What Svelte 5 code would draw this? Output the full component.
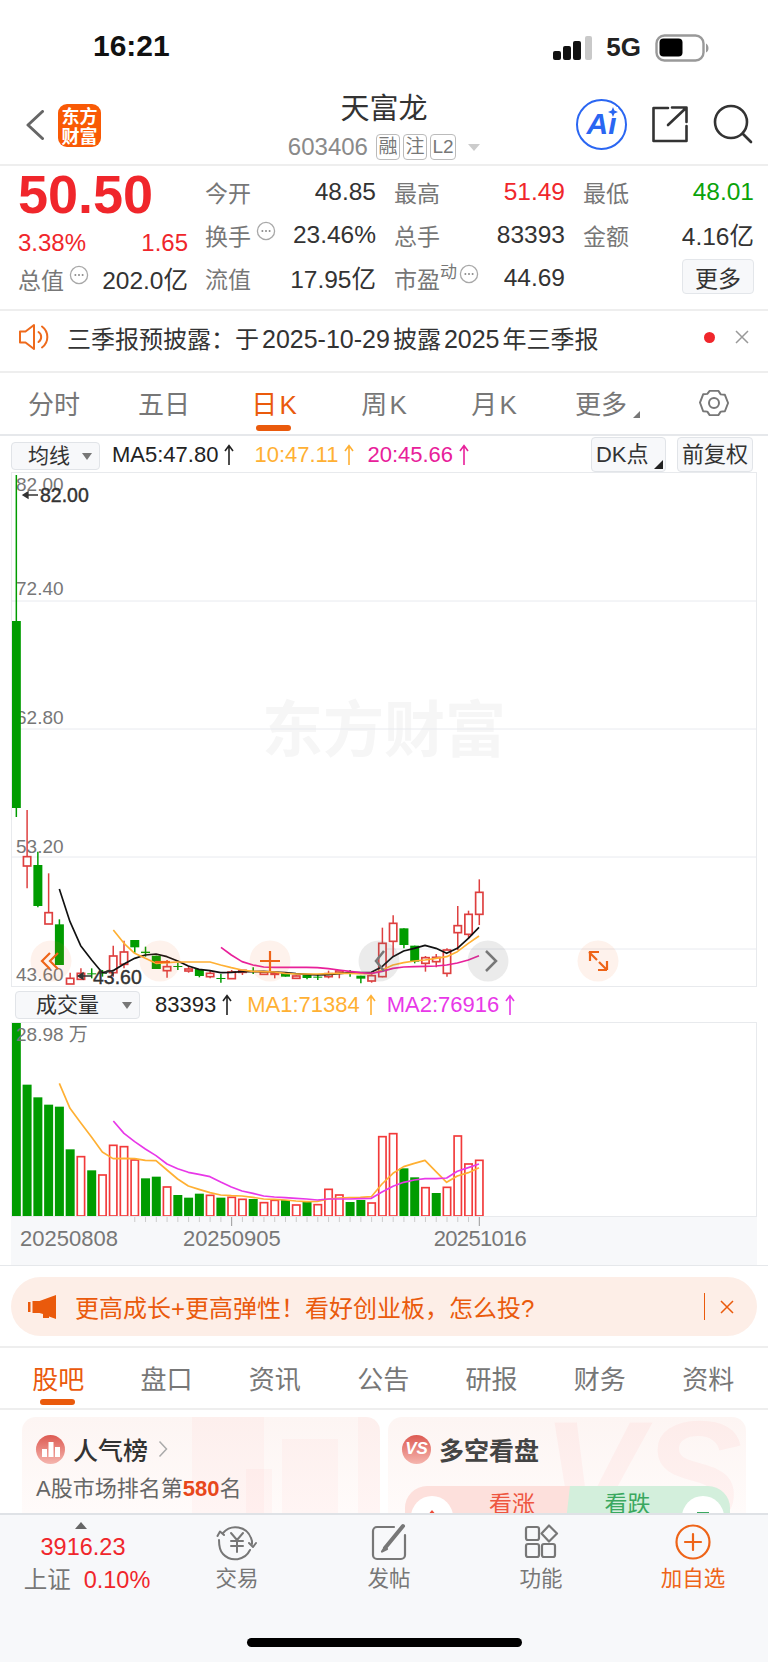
<script lang="ts">
	// Candle data is in the 3x units used when reading the chart: [x index, up, wickTop, wickBottom, bodyTop, bodyBottom]
	const candles: [number, number, number, number, number, number][] = [
		[0, 0, -915, 111, -477, 84], [1, 1, 90, 325, 230, 258], [2, 0, 215, 382, 255, 378], [3, 1, 280, 398, 398, 432],
		[4, 0, 418, 555, 433, 555], [5, 1, 578, 595, 595, 612], [6, 1, 565, 600, 580, 598], [7, 0, 565, 595, 580, 583],
		[8, 0, 570, 590, 578, 581], [9, 1, 497, 590, 528, 578], [10, 1, 482, 565, 516, 553], [11, 0, 480, 518, 480, 502],
		[12, 0, 500, 530, 515, 519], [13, 0, 527, 567, 527, 567], [14, 1, 540, 593, 560, 572], [15, 0, 548, 570, 558, 561],
		[16, 1, 558, 578, 567, 573], [17, 0, 567, 592, 567, 588], [18, 1, 572, 595, 580, 590], [19, 0, 582, 608, 594, 597],
		[20, 1, 570, 596, 576, 596], [21, 1, 571, 585, 571, 577], [22, 0, 562, 582, 573, 576], [23, 1, 574, 584, 576, 583],
		[24, 1, 578, 595, 578, 583], [25, 0, 578, 590, 578, 590], [26, 1, 586, 596, 588, 595], [27, 0, 584, 598, 584, 594],
		[28, 0, 582, 600, 590, 593], [29, 1, 572, 595, 581, 590], [30, 1, 572, 595, 573, 579], [31, 0, 570, 590, 578, 581],
		[32, 0, 587, 610, 587, 596], [33, 1, 578, 608, 587, 603], [34, 1, 443, 592, 490, 590], [35, 1, 406, 530, 430, 484],
		[36, 0, 445, 505, 445, 495], [37, 0, 497, 550, 497, 545], [38, 1, 528, 575, 533, 550], [39, 1, 522, 562, 532, 545],
		[40, 1, 505, 590, 510, 580], [41, 1, 378, 510, 437, 458], [42, 1, 392, 475, 403, 463], [43, 1, 298, 435, 337, 403]
	];

	const ma5 = '178,327 210,425 242,497 275,540 307,578 339,572 372,552 404,535 436,525 468,522 501,530 533,543 565,558 597,568 630,572 662,578 694,577 726,575 759,575 791,574 823,576 856,578 888,581 920,583 952,585 985,584 1017,581 1049,578 1081,578 1114,577 1146,560 1179,530 1211,513 1243,505 1275,496 1308,505 1340,520 1372,505 1405,475 1437,442';
	const ma10 = '340,450 372,490 404,520 436,535 468,550 501,548 533,546 565,546 597,546 630,546 662,555 694,563 726,570 759,574 791,575 823,576 856,580 888,582 920,582 952,582 985,581 1017,580 1049,580 1081,581 1114,581 1146,570 1179,555 1211,548 1243,543 1275,540 1308,535 1340,530 1372,515 1405,490 1437,468';
	const ma20 = '663,502 694,525 726,545 759,555 791,561 823,562 856,562 888,562 920,562 952,563 985,566 1017,570 1049,574 1081,578 1114,580 1146,574 1179,565 1211,561 1243,560 1275,559 1308,558 1340,555 1372,549 1405,540 1437,527';

	// [top, up]
	const volumes: [number, number][] = [
		[68, 0], [254, 0], [292, 0], [314, 0], [320, 0], [448, 0], [470, 1], [511, 0], [525, 1], [436, 1], [440, 1],
		[480, 1], [535, 0], [530, 0], [561, 1], [585, 0], [593, 0], [581, 0], [586, 1], [593, 0], [592, 1], [598, 1],
		[597, 0], [608, 1], [601, 1], [600, 0], [615, 1], [605, 0], [614, 1], [568, 1], [585, 1], [606, 0], [600, 0],
		[609, 1], [410, 1], [401, 1], [505, 0], [532, 0], [563, 1], [579, 0], [562, 1], [408, 1], [492, 1], [481, 1]
	];
	const volMa1 = '178,250 210,325 242,368 275,412 307,456 339,476 372,475 404,476 436,481 468,482 501,510 533,537 565,558 597,568 630,578 662,585 694,587 726,588 759,592 791,597 823,598 856,600 888,603 920,605 952,604 985,597 1017,594 1049,593 1081,592 1114,590 1146,552 1179,520 1211,500 1243,490 1275,481 1308,515 1340,547 1372,528 1405,518 1437,503';
	const volMa2 = '340,363 372,400 404,425 436,447 468,467 501,492 533,506 565,517 597,523 630,530 662,546 694,561 726,573 759,580 791,588 823,591 856,593 888,595 920,597 952,600 985,597 1017,597 1049,597 1081,596 1114,595 1146,576 1179,559 1211,547 1243,540 1275,536 1308,536 1340,534 1372,514 1405,503 1437,492';

	const cx = (i: number) => 49 + i * 32.3;
	const ticks = Array.from({ length: 33 }, (_, i) => 11 + i);

	const periods = ['分时', '五日', '日 K', '周 K', '月 K', '更多'];
	const sections = ['股吧', '盘口', '资讯', '公告', '研报', '财务', '资料'];
</script>

{#snippet dots(cls = '')}
	<svg class="dots {cls}" viewBox="0 0 20 20" width="20" height="20">
		<circle cx="10" cy="10" r="8.6" fill="none" stroke="#a8a8a8" stroke-width="1.3" />
		<circle cx="6.4" cy="10" r="1" fill="#8a8a8a" />
		<circle cx="10" cy="10" r="1" fill="#8a8a8a" />
		<circle cx="13.6" cy="10" r="1" fill="#8a8a8a" />
	</svg>
{/snippet}

{#snippet arrow()}
	<svg class="arrow" width="10" height="22" viewBox="0 0 10 22" fill="none" stroke="currentColor" stroke-width="1.6">
		<path d="M5 21V2M1 7l4-5.500L9 7" />
	</svg>
{/snippet}

{#snippet cross(size = 14)}
	<svg width={size} height={size} viewBox="0 0 14 14" fill="none" stroke="currentColor" stroke-width="1.5">
		<path d="M1 1l12 12M13 1 1 13" />
	</svg>
{/snippet}

<div class="page">
	<header class="status">
		<span class="time">16:21</span>
		<div class="status-right">
			<svg width="40" height="26" viewBox="0 0 40 26">
				<rect x="0" y="16" width="8" height="9" rx="2" fill="#111" />
				<rect x="10" y="11" width="8" height="14" rx="2" fill="#111" />
				<rect x="20" y="6" width="8" height="19" rx="2" fill="#111" />
				<rect x="32" y="1" width="7" height="24" rx="2" fill="#c9c9c9" />
			</svg>
			<span class="net">5G</span>
			<svg width="56" height="28" viewBox="0 0 56 28">
				<rect x="1.5" y="1.5" width="47" height="25" rx="8" fill="#fff" stroke="#999" stroke-width="2.4" />
				<rect x="4.5" y="4.5" width="23" height="18" rx="4" fill="#000" />
				<path d="M51 9.5c3 1 3.6 8 0 9z" fill="#999" />
			</svg>
		</div>
	</header>

	<nav class="topnav">
		<div class="topnav-left">
			<svg width="18" height="30" viewBox="0 0 18 30">
				<path d="M16.5 1.5 2 15l14.5 13.5" fill="none" stroke="#666" stroke-width="3" stroke-linecap="round" stroke-linejoin="round" />
			</svg>
			<div class="logo">东方<br />财富</div>
		</div>
		<div class="stock">
			<div class="stock-name">天富龙</div>
			<div class="stock-code">
				<span>603406</span>
				<i class="tag">融</i><i class="tag">注</i><i class="tag">L2</i>
				<b class="caret"></b>
			</div>
		</div>
		<div class="topnav-right">
			<div class="ai">
				<span>Ai</span>
				<svg class="spark" width="10" height="10" viewBox="0 0 10 10"><path d="M5 0 6.4 3.6 10 5 6.4 6.4 5 10 3.6 6.4 0 5 3.6 3.6z" fill="#2a66f2" /></svg>
			</div>
			<svg width="38" height="38" viewBox="0 0 38 38" fill="none" stroke="#333" stroke-width="2.6" stroke-linecap="round" stroke-linejoin="round">
				<path d="M17 3H2.5v33h33V21" />
				<path d="M17 20 35 3M21 2.5h14.5V17" />
			</svg>
			<svg width="40" height="40" viewBox="0 0 40 40" fill="none" stroke="#333" stroke-width="2.6" stroke-linecap="round">
				<circle cx="18" cy="18" r="16" />
				<path d="m30 30 8 8" />
			</svg>
		</div>
	</nav>

	<section class="quote">
		<div class="quote-main">
			<div class="price">50.50</div>
			<div class="change"><span>3.38%</span><span>1.65</span></div>
			<div class="cell"><span class="label">总值{@render dots()}</span><span class="val">202.0亿</span></div>
		</div>
		<div class="quote-grid">
			<div class="cell"><span class="label">今开</span><span class="val">48.85</span></div>
			<div class="cell"><span class="label">最高</span><span class="val up">51.49</span></div>
			<div class="cell"><span class="label">最低</span><span class="val down">48.01</span></div>
			<div class="cell"><span class="label">换手{@render dots()}</span><span class="val">23.46%</span></div>
			<div class="cell"><span class="label">总手</span><span class="val">83393</span></div>
			<div class="cell"><span class="label">金额</span><span class="val">4.16亿</span></div>
			<div class="cell"><span class="label">流值</span><span class="val">17.95亿</span></div>
			<div class="cell"><span class="label">市盈<sup>动</sup>{@render dots('tight')}</span><span class="val">44.69</span></div>
			<div class="cell more-cell"><button class="more">更多</button></div>
		</div>
	</section>

	<section class="notice">
		<svg width="32" height="28" viewBox="0 0 32 28" fill="none" stroke="#ee6a1c" stroke-width="2" stroke-linejoin="round" stroke-linecap="round">
			<path d="M2 8.5h5.5L16 2v24l-8.5-6.5H2z" />
			<path d="M20.5 9a6 6 0 0 1 0 10" />
			<path d="M24 3.5a13 13 0 0 1 0 21" />
		</svg>
		<p>三季报预披露：于<span class="n">2025-10-29</span>披露<span class="n">2025</span>年三季报</p>
		<i class="dot"></i>
		<span class="close">{@render cross()}</span>
	</section>

	<section class="periods">
		{#each periods as p, i}
			<div class="period" class:on={i === 2} class:more-tab={i === 5}>
				{p}{#if i === 5}<b class="corner"></b>{/if}
				{#if i === 2}<i class="bar"></i>{/if}
			</div>
		{/each}
		<div class="period">
			<svg width="32" height="32" viewBox="0 0 32 32" fill="none" stroke="#777" stroke-width="2" stroke-linejoin="round">
				<path d="M11.5 3.5h9l2.4 3.6 4.3.4 3.3 8.500-3.300 8.500-4.300.4-2.400 3.600h-9l-2.400-3.600-4.300-.4L1.500 15.500l3.300-8.500 4.300-.4z" transform="translate(.5 .5) scale(.97)" />
				<circle cx="16" cy="16" r="5" />
			</svg>
		</div>
	</section>

	<div class="toolbar">
		<div class="select wide">均线<b class="down-caret"></b></div>
		<div class="ma-list first">
			<span class="black">MA5:47.80{@render arrow()}</span>
			<span class="orange">10:47.11{@render arrow()}</span>
			<span class="pink">20:45.66{@render arrow()}</span>
		</div>
		<div class="tool-right">
			<div class="tool dk">DK点<b class="corner dark"></b></div>
			<div class="tool">前复权</div>
		</div>
	</div>

	<div class="chart price-chart">
		<svg width="746" height="515" viewBox="11 472 746 515">
			<text class="mark" x="384" y="752" text-anchor="middle">东方财富</text>
			<path class="grid" d="M11 601H757M11 729H757M11 857H757M380 949H757" />
			<text class="axis" x="16" y="491">82.00</text>
			<text class="axis" x="16" y="595">72.40</text>
			<text class="axis" x="16" y="724">62.80</text>
			<text class="axis" x="16" y="853">53.20</text>
			<text class="axis" x="16" y="981">43.60</text>
			<g transform="translate(0 780) scale(.33333)">
				{#each candles as [i, up, wt, wb, bt, bb]}
					<path d={`M${cx(i)} ${wt}V${wb}`} stroke={up ? '#de3f3f' : '#009c00'} stroke-width="4.500" />
					{#if up}
						<rect x={cx(i) - 11} y={bt} width="22" height={bb - bt} fill="#fff" stroke="#de3f3f" stroke-width="5" />
					{:else}
						<rect x={cx(i) - 13.5} y={bt} width="27" height={bb - bt} fill="#009c00" />
					{/if}
				{/each}
				<polyline class="line" points={ma5} stroke="#111" />
				<polyline class="line" points={ma10} stroke="#ffb033" />
				<polyline class="line" points={ma20} stroke="#e8209a" />
			</g>
			<text class="extreme" x="40" y="502">82.00</text>
			<path d="M23 495h15M23 495l5-3v6z" stroke="#333" stroke-width="1.3" fill="#333" />
			<text class="extreme" x="93" y="984">43.60</text>
			<path d="M78 976h14M78 976l5-3v6z" stroke="#333" stroke-width="1.300" fill="#333" />

			<circle class="tint" cx="51" cy="961" r="20.500" />
			<circle class="tint" cx="160" cy="961" r="20.500" />
			<circle class="tint" cx="270" cy="961" r="20.500" />
			<circle class="shade" cx="379" cy="961" r="20.500" />
			<circle class="shade" cx="488" cy="961" r="20.500" />
			<circle class="tint" cx="598" cy="961" r="20.500" />
			<g class="glyph">
				<path d="M50 953 42 961l8 8M58 953l-8 8 8 8" />
				<path d="M155 962h15" />
				<path d="M260 961h20M270 951v20" />
				<path d="M599 952h-9v9M589 952l8 8M607 970h-9M607 970v-9M607 970l-8-8" />
			</g>
			<g class="glyph grey">
				<path d="M384 951 376 961l8 10" />
				<path d="M486 951l10 10-10 10" />
			</g>
		</svg>
	</div>

	<div class="toolbar vol-bar">
		<div class="select vol-select">成交量<b class="down-caret"></b></div>
		<div class="ma-list second">
			<span class="black">83393{@render arrow()}</span>
			<span class="orange">MA1:71384{@render arrow()}</span>
			<span class="magenta">MA2:76916{@render arrow()}</span>
		</div>
	</div>

	<div class="chart vol-chart">
		<svg width="746" height="195" viewBox="11 1022 746 195">
			<g transform="translate(0 1000) scale(.33333)">
				{#each volumes as [top, up], i}
					{#if up}
						<rect x={cx(i) - 11} y={top} width="22" height={650 - top - 2} fill="#fff" stroke="#f23a3a" stroke-width="5" />
					{:else}
						<rect x={cx(i) - 13.500} y={top} width="27" height={650 - top} fill="#009c00" />
					{/if}
				{/each}
				<polyline class="line" points={volMa1} stroke="#ffb033" />
				<polyline class="line" points={volMa2} stroke="#e838e8" />
			</g>
			<text class="axis" x="16" y="1041">28.98 万</text>
		</svg>
	</div>

	<div class="dates">
		<svg class="ticks" width="746" height="10" viewBox="11 1217 746 10">
			{#each ticks as i}
				<path d={`M${cx(i) / 3} 1217v${i === 20 || i === 43 ? 9 : 5}`} stroke={i === 20 || i === 43 ? '#999' : '#ccc'} />
			{/each}
		</svg>
		<span>20250808</span><span>20250905</span><span>20251016</span>
	</div>

	<div class="promo-wrap">
		<div class="promo">
			<svg width="28" height="24" viewBox="0 0 28 24" fill="#ea5a0c">
				<rect x="0" y="7" width="2.500" height="10" />
				<path d="M4.500 6h7L28 0v24l-7-2.500V23h-6v-4l-3.500-1h-7z" />
			</svg>
			<p>更高成长+更高弹性！看好创业板，怎么投?</p>
			<i class="promo-sep"></i>
			<span class="promo-x">{@render cross()}</span>
		</div>
	</div>

	<div class="sections">
		{#each sections as s, i}
			<div class="section-tab" class:on={i === 0}>
				{s}
				{#if i === 0}<i class="bar"></i>{/if}
			</div>
		{/each}
	</div>

	<div class="cards">
		<article class="card">
			<svg class="card-bg" width="358" height="96" viewBox="0 0 358 96" fill="#f7554a" fill-opacity=".035">
				<rect x="170" y="0" width="72" height="96" />
				<rect x="224" y="52" width="26" height="44" />
				<rect x="260" y="22" width="56" height="74" />
				<rect x="336" y="0" width="22" height="96" />
			</svg>
			<div class="card-head">
				<i class="badge">
					<svg width="18" height="16" viewBox="0 0 18 16" fill="#fff"><rect x="0" y="8" width="5" height="8" /><rect x="6.500" y="1" width="5" height="15" /><rect x="13" y="6" width="5" height="10" /></svg>
				</i>
				<h3>人气榜</h3>
				<svg width="10" height="18" viewBox="0 0 10 18"><path d="M1.500 1.500 8.500 9l-7 7.500" fill="none" stroke="#aaa" stroke-width="1.500" /></svg>
			</div>
			<p class="rank">A股市场排名第<b>580</b>名</p>
		</article>
		<article class="card">
			<div class="card-vs">VS</div>
			<div class="card-head">
				<i class="badge vs">VS</i>
				<h3 class="strong">多空看盘</h3>
			</div>
			<div class="vote">
				<div class="vote-up">看涨</div>
				<div class="vote-down">看跌</div>
				<i class="knob left"></i>
				<i class="knob right"></i>
			</div>
		</article>
	</div>

	<footer class="tabbar">
		<div class="index">
			<b class="index-caret"></b>
			<div class="index-num">3916.23</div>
			<div class="index-line"><span>上证</span><em>0.10%</em></div>
		</div>
		<div class="tab-item">
			<svg width="42" height="38" viewBox="0 0 42 38" fill="none" stroke="#777" stroke-width="2" stroke-linecap="round" stroke-linejoin="round">
				<path d="M7 10a16.500 16.500 0 0 1 28 5c1 2 1.200 4 1 6" />
				<path d="M34 27a16.500 16.500 0 0 1-27 4c-3-3-4-8-4-14" />
				<path d="M1.500 13 4 8.500 8 12M33 20l4 4 3-4" />
				<path d="M15 10l6 7 6-7M21 17v12M15 18h12M15 23h12" />
			</svg>
			<span>交易</span>
		</div>
		<div class="tab-item">
			<svg width="38" height="38" viewBox="0 0 38 38" fill="none" stroke="#777" stroke-width="2.200" stroke-linecap="round" stroke-linejoin="round">
				<path d="M24 4H7a4 4 0 0 0-4 4v24a4 4 0 0 0 4 4h24a4 4 0 0 0 4-4V12" />
				<path d="M15 25 33 3" stroke-width="4" />
				<path d="M12 28.500 15 24l2 2z" fill="#777" />
			</svg>
			<span>发帖</span>
		</div>
		<div class="tab-item">
			<svg width="38" height="38" viewBox="0 0 38 38" fill="none" stroke="#777" stroke-width="2.200" stroke-linejoin="round">
				<rect x="4" y="4" width="13" height="13" rx="2" />
				<path d="M27 2.500 35 10.500 27 18.500 19.500 10.500z" />
				<rect x="4" y="21" width="13" height="13" rx="2" />
				<rect x="20" y="21" width="13" height="13" rx="2" />
			</svg>
			<span>功能</span>
		</div>
		<div class="tab-item add">
			<svg width="38" height="38" viewBox="0 0 38 38" fill="none" stroke="#ee6418" stroke-width="2.200" stroke-linecap="round">
				<circle cx="19" cy="19" r="16.500" />
				<path d="M11 19h16M19 11v16" />
			</svg>
			<span>加自选</span>
		</div>
		<i class="home"></i>
	</footer>
</div>

<style>
	:global(body) {
		margin: 0;
		background: #fff;
	}

	.page {
		width: 768px;
		height: 1662px;
		overflow: hidden;
		font-family: 'Liberation Sans', 'Noto Sans CJK SC', sans-serif;
		color: #333;
	}

	p,
	h3 {
		margin: 0;
	}

	i,
	em {
		font-style: normal;
	}

	.status {
		height: 84px;
		display: flex;
		align-items: flex-end;
		justify-content: space-between;
		padding: 0 57px 21px 93px;
		box-sizing: border-box;
	}

	.time {
		font-size: 30px;
		line-height: 34px;
		font-weight: 700;
		color: #111;
	}

	.status-right {
		display: flex;
		align-items: center;
		gap: 13px;
		margin-left: auto;
	}

	.net {
		font-size: 26px;
		font-weight: 700;
		color: #222;
		margin-right: 1px;
	}

	.topnav {
		height: 82px;
		display: grid;
		grid-template-columns: 1fr auto 1fr;
		align-items: center;
		padding: 0 15px;
		border-bottom: 2px solid #eeeeee;
		box-sizing: border-box;
	}

	.topnav-left {
		display: flex;
		align-items: center;
		gap: 14px;
		padding: 2px 0 0 11px;
	}

	.logo {
		width: 43px;
		height: 43px;
		border-radius: 9px;
		background: #f95a05;
		color: #fff;
		font: 700 18px/20px 'Noto Sans CJK SC', sans-serif;
		text-align: center;
		padding-top: 1px;
		box-sizing: border-box;
	}

	.stock {
		text-align: center;
		padding-top: 4px;
	}

	.stock-name {
		font-size: 29px;
		line-height: 36px;
		color: #333;
	}

	.stock-code {
		display: flex;
		align-items: center;
		gap: 3px;
		height: 28px;
		color: #8a8a8a;
		font-size: 24px;
		margin-top: 6px;
	}

	.stock-code span {
		margin-right: 5px;
	}

	.tag {
		border: 1px solid #bbb;
		border-radius: 4px;
		font-size: 19px;
		line-height: 24px;
		padding: 0 1.500px;
		color: #777;
	}

	.caret {
		width: 0;
		height: 0;
		margin-left: 9px;
		border: 6px solid transparent;
		border-top: 7px solid #ccc;
		border-bottom: 0;
	}

	.topnav-right {
		display: flex;
		align-items: center;
		justify-content: flex-end;
		gap: 24px;
	}

	.ai {
		position: relative;
		width: 51px;
		height: 51px;
		border: 2.500px solid #2a66f2;
		border-radius: 50%;
		box-sizing: border-box;
		text-align: center;
		color: #2a66f2;
		font: italic 700 30px/46px 'Liberation Sans', sans-serif;
	}

	.spark {
		position: absolute;
		top: 6px;
		right: 7px;
		background: #fff;
	}

	.quote {
		height: 145px;
		display: grid;
		grid-template-columns: 170px 1fr;
		column-gap: 17px;
		padding: 4px 14px 0 18px;
		border-bottom: 2px solid #eeeeee;
		box-sizing: border-box;
	}

	.quote-main {
		display: flex;
		flex-direction: column;
	}

	.price {
		font-size: 54px;
		line-height: 50px;
		font-weight: 700;
		color: #f0262b;
		margin-top: -1px;
	}

	.change {
		display: flex;
		justify-content: space-between;
		font-size: 24px;
		line-height: 30px;
		margin-top: 9px;
		color: #f0262b;
	}

	.quote-main .cell {
		margin-top: -1px;
	}

	.quote-grid {
		display: grid;
		grid-template-columns: repeat(3, 1fr);
		grid-auto-rows: 43px;
		column-gap: 18px;
	}

	.cell {
		display: flex;
		align-items: center;
		justify-content: space-between;
		height: 43px;
	}

	.label {
		display: flex;
		align-items: center;
		font-size: 23px;
		color: #777;
		white-space: nowrap;
	}

	.label sup {
		font-size: 17px;
		line-height: 17px;
		align-self: flex-start;
		margin-top: 3px;
	}

	.dots {
		align-self: flex-start;
		margin: 3px 0 0 5px;
	}

	.dots.tight {
		margin-left: 2px;
	}

	.val {
		font-size: 24.500px;
		color: #333;
		white-space: nowrap;
	}

	.up {
		color: #f0262b;
	}

	.down {
		color: #0aa30a;
	}

	.more-cell {
		justify-content: flex-end;
	}

	.more {
		width: 72px;
		height: 35px;
		margin-top: -2px;
		background: #f7f8fa;
		border: 1px solid #e3e6ea;
		border-radius: 4px;
		font: 23px 'Liberation Sans', 'Noto Sans CJK SC', sans-serif;
		color: #333;
		padding: 0;
	}

	.notice {
		height: 62px;
		display: flex;
		align-items: center;
		padding: 0 19px 8px 18px;
		border-bottom: 2px solid #eeeeee;
		box-sizing: border-box;
	}

	.notice p {
		flex: 1;
		margin-left: 17px;
		font-size: 24px;
		color: #333;
		white-space: nowrap;
	}

	.n {
		font-size: 25px;
		margin: 0 3px;
	}

	.dot {
		width: 11px;
		height: 11px;
		border-radius: 50%;
		background: #f0262b;
		margin-right: 20px;
	}

	.close {
		display: flex;
		color: #999;
	}

	.periods {
		height: 63px;
		display: grid;
		grid-template-columns: repeat(7, 110px);
		margin-left: -1px;
		border-bottom: 2px solid #e6e8eb;
		box-sizing: border-box;
		width: 769px;
	}

	.period {
		position: relative;
		display: flex;
		align-items: center;
		justify-content: center;
		font-size: 26px;
		color: #777;
		padding-bottom: 2px;
		word-spacing: -5px;
	}

	.period.on {
		color: #ea5a0c;
	}

	.period.more-tab {
		padding-right: 6px;
		box-sizing: border-box;
	}

	.bar {
		position: absolute;
		left: 50%;
		bottom: 3px;
		width: 35px;
		height: 6px;
		margin-left: -18px;
		border-radius: 3px;
		background: #ea5a0c;
	}

	.corner {
		position: absolute;
		right: 19px;
		bottom: 16px;
		width: 0;
		height: 0;
		border-left: 7px solid transparent;
		border-bottom: 7px solid #777;
	}

	.toolbar {
		height: 36px;
		display: flex;
		align-items: center;
		padding: 0 15px 0 11px;
		box-sizing: border-box;
	}

	.select {
		position: relative;
		height: 28px;
		background: #f7f8fa;
		border: 1px solid #e1e4e8;
		border-radius: 4px;
		box-sizing: border-box;
		font-size: 21px;
		line-height: 26px;
		color: #333;
	}

	.select.wide {
		width: 89px;
		padding-left: 16px;
		margin-top: 3px;
	}

	.select.vol-select {
		width: 125px;
		padding-left: 20px;
		margin-left: 4px;
	}

	.down-caret {
		position: absolute;
		right: 7px;
		top: 10px;
		border: 5px solid transparent;
		border-top: 7px solid #777;
		border-bottom: 0;
	}

	.ma-list {
		display: flex;
		font-size: 22px;
		white-space: nowrap;
		margin-left: 12px;
	}

	.ma-list span {
		display: flex;
		align-items: center;
	}

	.arrow {
		margin-left: 6px;
	}

	.ma-list.first {
		gap: 20px;
		margin-top: 2px;
	}

	.ma-list.first span:nth-child(3) {
		margin-left: -7px;
	}

	.ma-list.second {
		gap: 15px;
		margin-left: 15px;
	}

	.ma-list.second span:nth-child(3) {
		margin-left: -4px;
	}

	.black {
		color: #222;
	}

	.orange {
		color: #ffb033;
	}

	.pink {
		color: #e8209a;
	}

	.magenta {
		color: #e838e8;
	}

	.tool-right {
		display: flex;
		gap: 11px;
		margin-left: auto;
	}

	.tool {
		position: relative;
		height: 35px;
		padding: 0 4px;
		background: #f7f8fa;
		border: 1px solid #e1e4e8;
		border-radius: 4px;
		box-sizing: border-box;
		font-size: 22px;
		line-height: 33px;
		color: #333;
	}

	.tool.dk {
		width: 75px;
	}

	.corner.dark {
		right: 2px;
		bottom: 2px;
		border-bottom-color: #222;
		border-left-width: 9px;
		border-bottom-width: 9px;
	}

	.chart {
		width: 746px;
		margin-left: 11px;
		outline: 1px solid #e8eaed;
		outline-offset: -1px;
		overflow: hidden;
	}

	.chart svg {
		display: block;
	}

	.price-chart {
		height: 515px;
	}

	.vol-bar {
		height: 35px;
		padding-top: 1px;
	}

	.vol-chart {
		height: 195px;
	}

	.grid {
		stroke: #e8eaef;
		stroke-width: 1;
		fill: none;
	}

	.axis {
		font-size: 19px;
		fill: #777;
	}

	.mark {
		font: 700 61px 'Noto Sans CJK SC', sans-serif;
		fill: #f6f6f6;
	}

	.extreme {
		font-size: 19.500px;
		fill: #333;
		stroke: #333;
		stroke-width: 0.4;
	}

	.line {
		fill: none;
		stroke-width: 5;
		stroke-linejoin: round;
	}

	.tint {
		fill: rgba(240, 110, 40, 0.09);
	}

	.shade {
		fill: rgba(110, 110, 110, 0.14);
	}

	.glyph {
		fill: none;
		stroke: #ee6418;
		stroke-width: 2.200;
	}

	.glyph.grey {
		stroke: #777;
		stroke-width: 2.500;
	}

	.dates {
		position: relative;
		width: 746px;
		height: 48px;
		margin-left: 11px;
		background: #f7f8fa;
		box-sizing: border-box;
		font-size: 22px;
		line-height: 44px;
		color: #777;
		padding-left: 9px;
		display: flex;
	}

	.dates span:nth-of-type(2) {
		margin-left: 65px;
	}

	.dates span:nth-of-type(3) {
		margin-left: 153px;
		letter-spacing: -0.7px;
	}

	.ticks {
		position: absolute;
		left: 0;
		top: 0;
	}

	.promo-wrap {
		height: 83px;
		padding: 11px 11px 0;
		border-top: 1px solid #e6e8eb;
		border-bottom: 2px solid #eeeeee;
		box-sizing: border-box;
	}

	.promo {
		height: 59px;
		border-radius: 30px;
		background: #fdeee7;
		display: flex;
		align-items: center;
		padding: 0 23px 0 17px;
	}

	.promo p {
		flex: 1;
		margin-left: 19px;
		font-size: 24px;
		color: #ea5a0c;
		white-space: nowrap;
	}

	.promo-sep {
		width: 1px;
		height: 27px;
		background: #ea5a0c;
	}

	.promo-x {
		display: flex;
		margin-left: 15px;
		color: #ea5a0c;
	}

	.sections {
		height: 62px;
		display: grid;
		grid-template-columns: repeat(7, 108.330px);
		padding-left: 4px;
		border-bottom: 2px solid #eeeeee;
		box-sizing: border-box;
	}

	.section-tab {
		position: relative;
		display: flex;
		align-items: center;
		justify-content: center;
		font-size: 26px;
		color: #777;
		padding-bottom: 2px;
	}

	.section-tab.on {
		color: #ea5a0c;
	}

	.cards {
		height: 103px;
		overflow: hidden;
		display: grid;
		grid-template-columns: 358px 358px;
		column-gap: 8px;
		padding: 7px 0 0 22px;
		box-sizing: border-box;
	}

	.card {
		position: relative;
		height: 160px;
		overflow: hidden;
		border-radius: 14px;
		background: linear-gradient(180deg, #fdf5f3 0%, #fffbfa 60%, #fff 100%);
		padding: 16px 14px;
		box-sizing: border-box;
	}

	.card-bg {
		position: absolute;
		left: 0;
		top: 0;
	}

	.card-vs {
		position: absolute;
		right: 4px;
		top: -28px;
		font: italic 700 150px/170px 'Liberation Sans', sans-serif;
		color: rgba(247, 85, 74, 0.05);
	}

	.card-head {
		position: relative;
		display: flex;
		align-items: center;
		height: 30px;
		margin-top: 1px;
	}

	.badge {
		width: 29px;
		height: 29px;
		border-radius: 50%;
		background: linear-gradient(180deg, #dd5a52, #f5b5ae);
		display: flex;
		align-items: center;
		justify-content: center;
		margin-right: 8px;
	}

	.badge.vs {
		font: italic 700 17px 'Liberation Sans', sans-serif;
		color: #fff;
	}

	.card-head h3 {
		font-size: 25px;
		font-weight: 500;
		color: #333;
		margin-right: 10px;
	}

	.card-head h3.strong {
		font-weight: 700;
		color: #444;
	}

	.rank {
		position: relative;
		margin-top: 10px;
		font-size: 22px;
		line-height: 30px;
		color: #666;
		white-space: nowrap;
	}

	.rank b {
		color: #e8481c;
	}

	.vote {
		position: relative;
		display: flex;
		width: 325px;
		height: 44px;
		margin: 22px 0 0 3px;
		border-radius: 22px 22px 0 0;
		overflow: hidden;
		font-size: 23px;
		line-height: 36px;
		text-align: center;
	}

	.vote-up {
		width: 168px;
		background: #fde0dc;
		color: #ee5540;
		padding-left: 46px;
		box-sizing: border-box;
		clip-path: polygon(0 0, 100% 0, 98% 100%, 0 100%);
	}

	.vote-down {
		width: 165px;
		margin-left: -8px;
		background: #d3efdc;
		color: #3aa85f;
		padding-right: 40px;
		box-sizing: border-box;
		clip-path: polygon(3% 0, 100% 0, 100% 100%, 0 100%);
	}

	.knob {
		position: absolute;
		top: 10px;
		width: 42px;
		height: 42px;
		border-radius: 50%;
		background: #fff;
	}

	.knob.left {
		left: 6px;
	}

	.knob.right {
		right: 6px;
	}

	.knob.left::after {
		content: '';
		position: absolute;
		left: 16px;
		top: 14px;
		border: 5px solid transparent;
		border-bottom: 6px solid #ee4a38;
		border-top: 0;
	}

	.knob.right::after {
		content: '';
		position: absolute;
		left: 15px;
		top: 16px;
		width: 12px;
		height: 2px;
		background: #3aa85f;
	}

	.tabbar {
		position: relative;
		height: 149px;
		background: #f7f8fa;
		border-top: 2px solid #dfe2e6;
		box-sizing: border-box;
		display: grid;
		grid-template-columns: repeat(5, 152px);
		padding-left: 9px;
		align-items: start;
	}

	.index {
		text-align: center;
		position: relative;
		padding-top: 18px;
	}

	.index-caret {
		position: absolute;
		left: 66px;
		top: 7px;
		border: 6px solid transparent;
		border-bottom: 7px solid #666;
		border-top: 0;
	}

	.index-num {
		font-size: 23.500px;
		line-height: 28px;
		color: #f0262b;
		padding-right: 4px;
	}

	.index-line {
		display: flex;
		justify-content: center;
		gap: 13px;
		font-size: 23.500px;
		line-height: 34px;
		margin-top: 2px;
		color: #777;
		padding-left: 4px;
	}

	.index-line em {
		color: #f0262b;
		font-size: 23.500px;
	}

	.tab-item {
		display: flex;
		flex-direction: column;
		align-items: center;
		padding-top: 8px;
		font-size: 21.500px;
		line-height: 34px;
		color: #777;
	}

	.tab-item span {
		margin-top: 1px;
	}

	.tab-item.add {
		color: #ee6418;
	}

	.home {
		position: absolute;
		left: 247px;
		top: 123px;
		width: 275px;
		height: 9px;
		border-radius: 5px;
		background: #000;
	}
</style>
